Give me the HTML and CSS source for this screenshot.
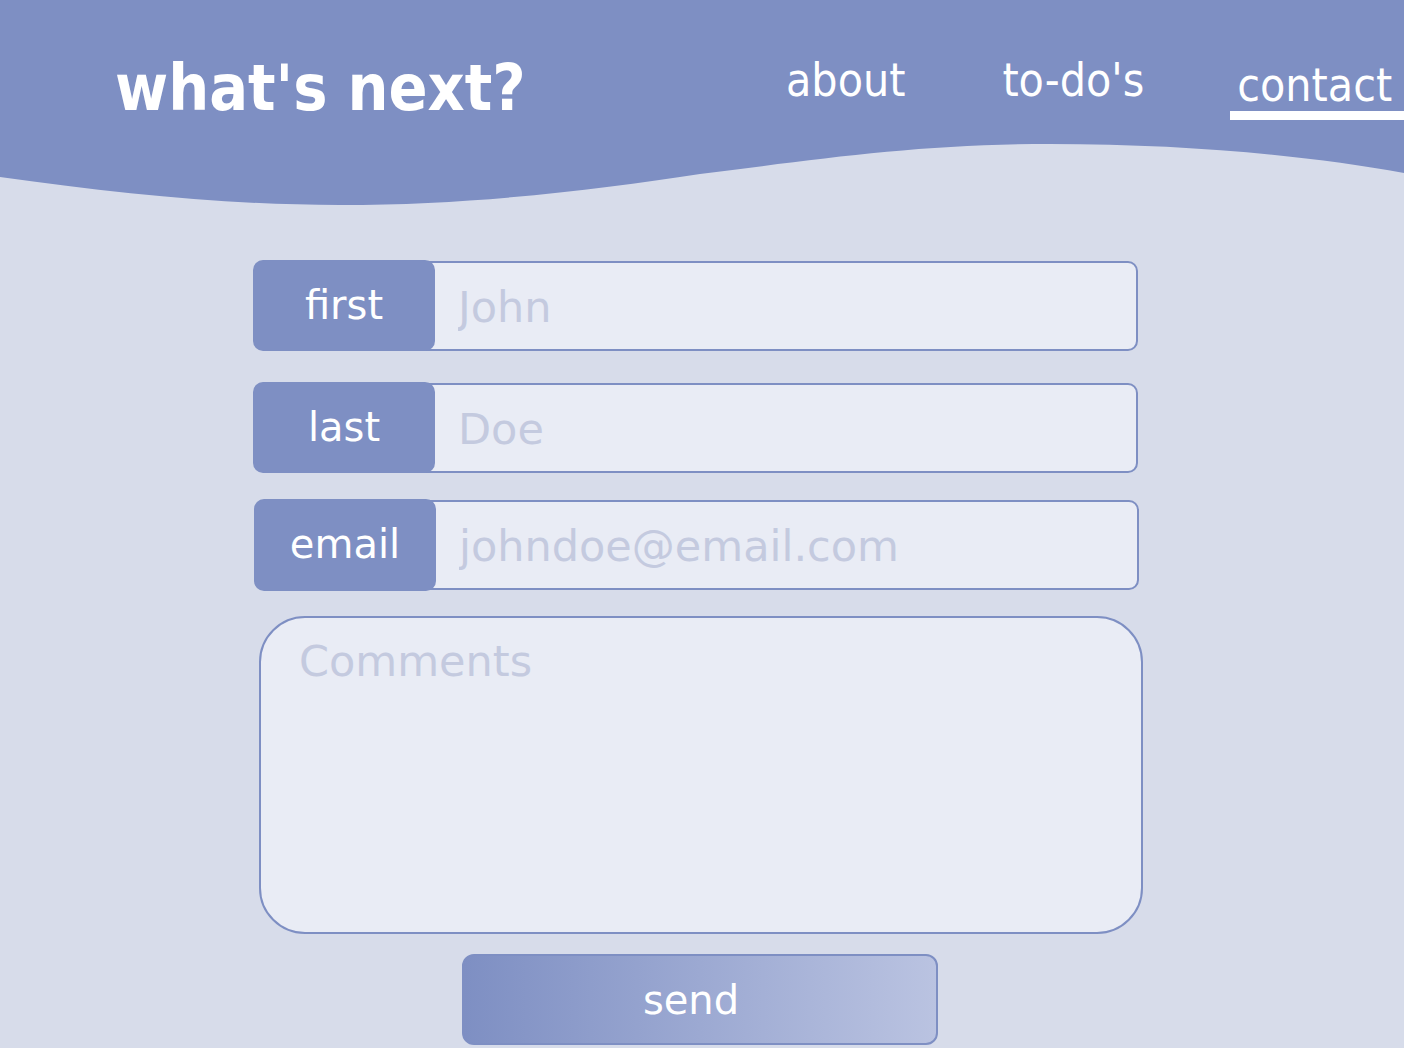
FILE: index.html
```html
<!DOCTYPE html>
<html lang="en">
<head>
<meta charset="utf-8">
<title>what's next? — contact</title>
<link rel="stylesheet" href="styles.css">
</head>
<body>
<header class="site-header">
  <div class="bar">
    <h1 class="logo">what's next?</h1>
    <nav class="nav">
      <a class="nav-link nav-link--about" href="#">about</a>
      <a class="nav-link nav-link--todos" href="#">to-do's</a>
      <a class="nav-link nav-link--active" href="#">contact</a>
    </nav>
  </div>
  <svg class="wave" viewBox="0 0 1404 62" preserveAspectRatio="none" aria-hidden="true">
    <path d="M0 0 H1404 V29 C1310 12 1190 0 1050 0 C920 0 820 15 700 30 C600 45 480 61 340 61 C230 61 120 50 0 33 Z" fill="#7e8fc3"/>
  </svg>
</header>
<main class="page">
  <form class="form">
    <div class="field field--first">
      <label class="field-label" for="first">first</label>
      <input class="field-input" id="first" type="text" placeholder="John">
    </div>
    <div class="field field--last">
      <label class="field-label" for="last">last</label>
      <input class="field-input" id="last" type="text" placeholder="Doe">
    </div>
    <div class="field field--email">
      <label class="field-label" for="email">email</label>
      <input class="field-input" id="email" type="email" placeholder="johndoe@email.com">
    </div>
    <textarea class="comments" placeholder="Comments"></textarea>
    <button class="send" type="button">send</button>
  </form>
</main>
</body>
</html>
```
FILE: styles.css
```css
* { box-sizing: border-box; }

html, body {
  margin: 0;
  padding: 0;
  background: #d7dcea;
  font-family: "DejaVu Sans", sans-serif;
  overflow: hidden;
}

.site-header {
  display: block;
}

.bar {
  background: #7e8fc3;
  height: 144px;
  display: flex;
  align-items: flex-start;
  overflow: hidden;
}

.logo {
  flex: 0 0 786px;
  margin: 0;
  padding: 56px 0 0 115px;
  font-family: "DejaVu Sans Condensed", "DejaVu Sans", sans-serif;
  font-size: 64px;
  font-weight: bold;
  color: #ffffff;
  line-height: 1;
  white-space: nowrap;
}

.nav {
  display: flex;
  flex-shrink: 0;
  align-items: flex-start;
  padding-top: 57px;
}

.nav-link {
  color: #ffffff;
  text-decoration: none;
  font-family: "DejaVu Sans Condensed", "DejaVu Sans", sans-serif;
  font-size: 46px;
  line-height: 1;
  white-space: nowrap;
  flex-shrink: 0;
}

.nav-link--about { margin-right: 97px; }
.nav-link--todos { margin-right: 86px; }

.nav-link--active {
  margin-top: 5px;
  padding: 0 16px 3px 7px;
  border-bottom: 9px solid #ffffff;
}

.wave {
  display: block;
  width: 100%;
  height: 62px;
}

.page {
  padding-top: 54px;
}

.form {
  width: 890px;
  margin-left: 253px;
  display: flex;
  flex-direction: column;
}

.field {
  display: flex;
  height: 91px;
  width: 885px;
}

.field--first { margin-bottom: 31px; }
.field--last { margin-bottom: 26px; }
.field--email { margin-bottom: 25px; margin-left: 1px; height: 92px; }

.field-label {
  position: relative;
  z-index: 1;
  flex: 0 0 182px;
  background: #7e8fc3;
  color: #ffffff;
  border-radius: 10px;
  font-size: 40px;
  display: flex;
  align-items: center;
  justify-content: center;
  padding-bottom: 2px;
}

.field-input {
  flex: 1;
  margin: 1px 0 0 -14px;
  height: 90px;
  border: 2px solid #7e8fc3;
  border-radius: 0 10px 10px 0;
  background: #e9ecf5;
  font-family: inherit;
  font-size: 43px;
  color: #4a5690;
  padding: 2px 0 0 35px;
  outline: none;
}

.field-input::placeholder,
.comments::placeholder {
  color: #c4cadf;
  opacity: 1;
}

.comments {
  margin-left: 6px;
  width: 884px;
  height: 318px;
  border: 2px solid #7e8fc3;
  border-radius: 46px;
  background: #e9ecf5;
  font-family: inherit;
  font-size: 43px;
  padding: 18px 38px;
  resize: none;
  outline: none;
  margin-bottom: 20px;
  display: block;
}

.send {
  align-self: flex-start;
  margin-left: 209px;
  width: 476px;
  height: 91px;
  border: 2px solid #7e8fc3;
  border-radius: 12px;
  background: linear-gradient(to right, #7e8fc3, #bac3e1);
  color: #ffffff;
  font-family: inherit;
  font-size: 40px;
  padding: 0 18px 0 0;
}
```
